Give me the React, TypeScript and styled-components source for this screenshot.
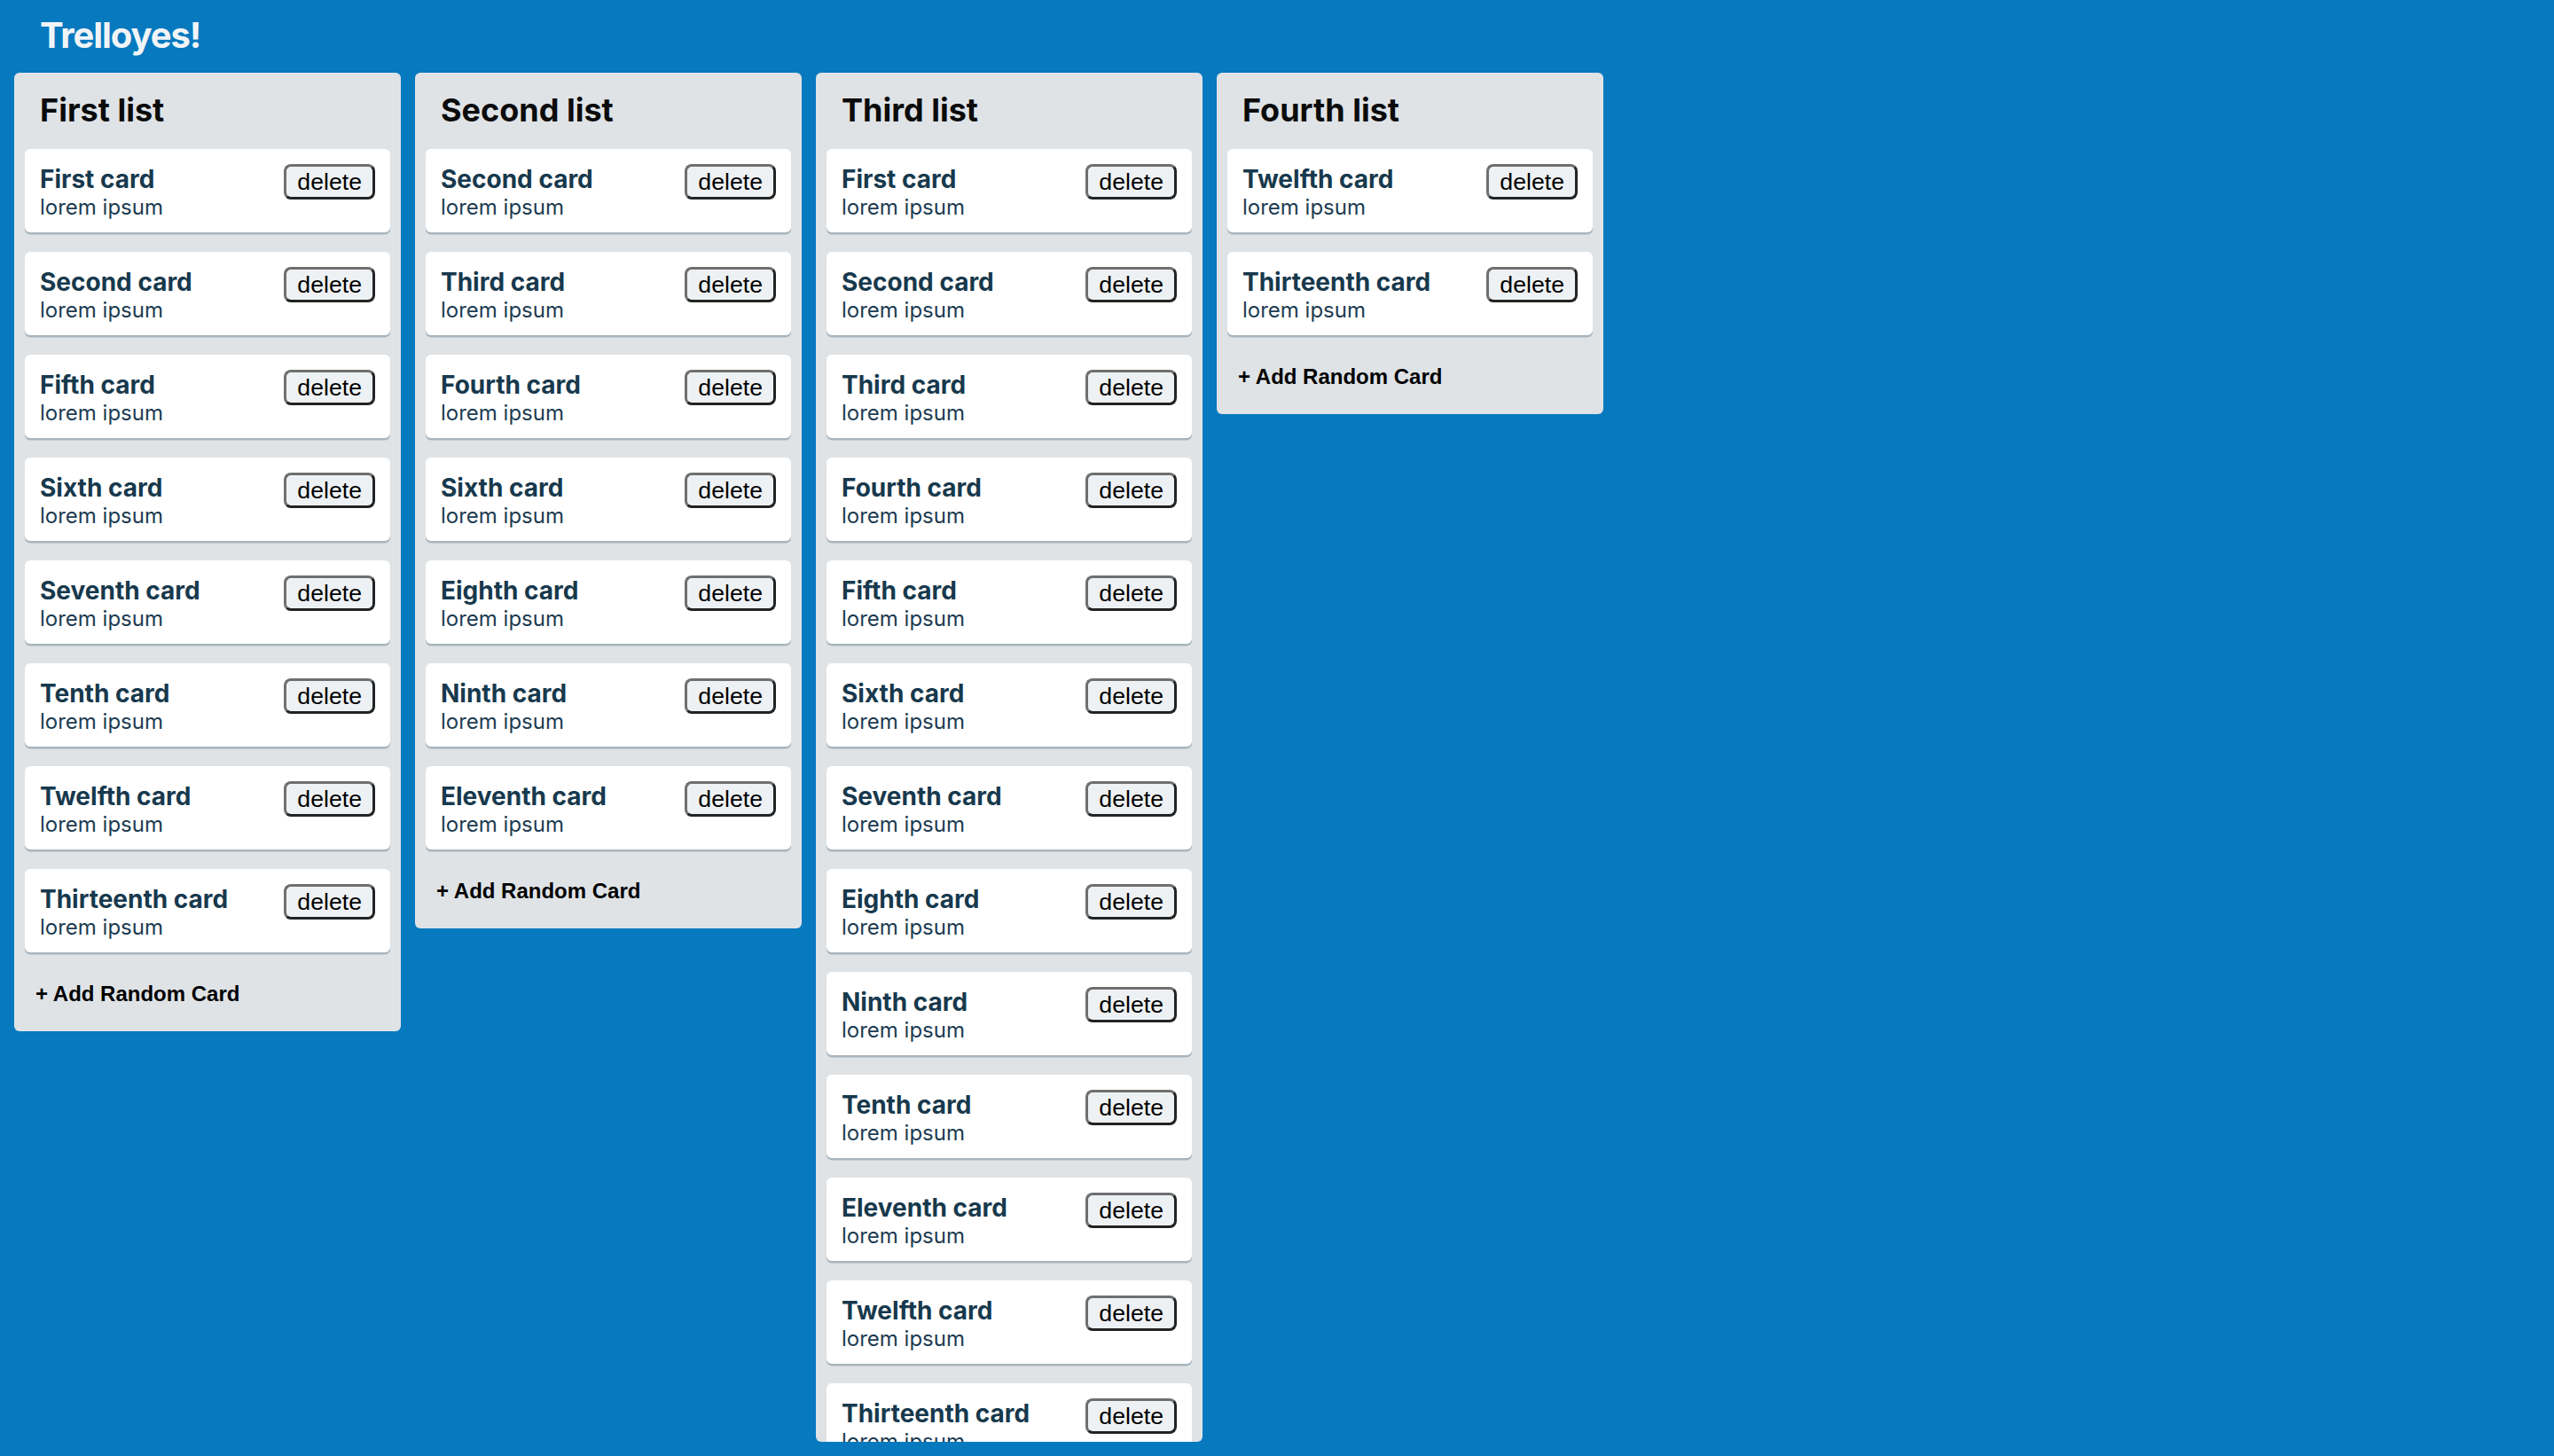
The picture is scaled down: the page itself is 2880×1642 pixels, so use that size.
import React from "react";
import styled, { createGlobalStyle } from "styled-components";

const GlobalStyle = createGlobalStyle`
  html, body {
    margin: 0;
    padding: 0;
    background: #0779bf;
  }
  body {
    font-family: Inter, "Noto Sans", sans-serif;
  }
  * { box-sizing: border-box; }
`;

const AppShell = styled.div`
  height: 100vh;
  display: flex;
  flex-direction: column;
  background: #0779bf;
`;

const Header = styled.header`
  flex-shrink: 0;
  padding: 16px 45px 0;
  height: 82px;
`;

const Title = styled.h1`
  margin: 0;
  font-family: Inter, sans-serif;
  font-weight: 700;
  font-size: 40px;
  line-height: 48px;
  color: #f1f4f7;
  letter-spacing: -1.1px;
`;

const Board = styled.main`
  flex: 1;
  min-height: 0;
  display: flex;
  align-items: flex-start;
  gap: 16px;
  padding: 0 16px 16px;
`;

const List = styled.section`
  flex-shrink: 0;
  width: 436px;
  max-height: 100%;
  overflow-y: auto;
  scrollbar-width: none;
  background: #dfe3e6;
  border-radius: 6px;
  padding: 12px;
  &::-webkit-scrollbar { display: none; }
`;

const ListTitle = styled.h2`
  margin: 8.5px 17px 21.5px;
  font-family: Inter, sans-serif;
  font-weight: 700;
  font-size: 36px;
  line-height: 43.6px;
  color: #0b0b0b;
`;

const Card = styled.div`
  display: flex;
  justify-content: space-between;
  align-items: flex-start;
  background: #ffffff;
  border-radius: 6px;
  box-shadow: 0 2.5px 0 rgba(9, 45, 66, 0.25);
  padding: 17px 17px 14px;
  margin-bottom: 22px;
`;

const CardText = styled.div`
  display: flex;
  flex-direction: column;
`;

const CardTitle = styled.h3`
  margin: 0;
  font-family: Inter, sans-serif;
  font-weight: 700;
  font-size: 28px;
  line-height: 34px;
  color: #17394d;
`;

const CardBody = styled.p`
  margin: 0;
  font-family: Inter, sans-serif;
  font-weight: 400;
  font-size: 24px;
  line-height: 29px;
  color: #1d3c52;
`;

const DeleteButton = styled.button`
  margin-top: 0;
  font-family: "Liberation Sans", Arial, sans-serif;
  font-size: 26.67px;
  line-height: 30.6px;
  color: #000;
  background: #eef1f4;
  border: 3px solid;
  border-color: #6f6f6f #232323 #232323 #6f6f6f;
  border-radius: 8px;
  padding: 2px 12px;
  cursor: pointer;
`;

const AddButton = styled.button`
  display: block;
  margin: 0 0 15px;
  padding: 11px 12px 2px;
  border: none;
  background: none;
  font-family: "Liberation Sans", Arial, sans-serif;
  font-weight: 700;
  font-size: 24px;
  line-height: 27.6px;
  color: #000;
  cursor: pointer;
`;

const lists: { title: string; cards: string[] }[] = [
  {
    title: "First list",
    cards: ["First", "Second", "Fifth", "Sixth", "Seventh", "Tenth", "Twelfth", "Thirteenth"],
  },
  {
    title: "Second list",
    cards: ["Second", "Third", "Fourth", "Sixth", "Eighth", "Ninth", "Eleventh"],
  },
  {
    title: "Third list",
    cards: [
      "First", "Second", "Third", "Fourth", "Fifth", "Sixth", "Seventh",
      "Eighth", "Ninth", "Tenth", "Eleventh", "Twelfth", "Thirteenth",
    ],
  },
  {
    title: "Fourth list",
    cards: ["Twelfth", "Thirteenth"],
  },
];

export default function App() {
  return (
    <>
      <GlobalStyle />
      <AppShell>
        <Header>
          <Title>Trelloyes!</Title>
        </Header>
        <Board>
          {lists.map((list) => (
            <List key={list.title}>
              <ListTitle>{list.title}</ListTitle>
              {list.cards.map((c) => (
                <Card key={c}>
                  <CardText>
                    <CardTitle>{c} card</CardTitle>
                    <CardBody>lorem ipsum</CardBody>
                  </CardText>
                  <DeleteButton type="button">delete</DeleteButton>
                </Card>
              ))}
              <AddButton type="button">+ Add Random Card</AddButton>
            </List>
          ))}
        </Board>
      </AppShell>
    </>
  );
}
